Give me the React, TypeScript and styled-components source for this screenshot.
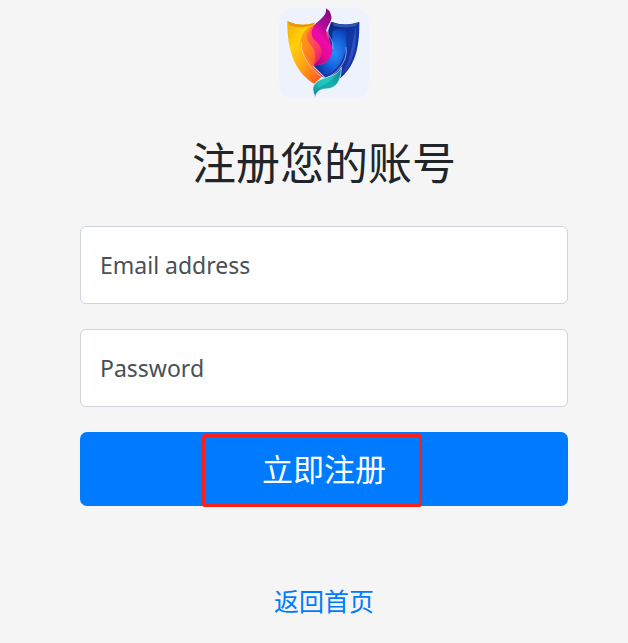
import React from "react";
import styled, { createGlobalStyle } from "styled-components";

const GlobalStyle = createGlobalStyle`
  *, *::before, *::after { box-sizing: border-box; }
  body {
    margin: 0;
    background: #f5f5f5;
    color: #212529;
    font-family: "Noto Sans", "Noto Sans CJK SC", sans-serif;
  }
`;

const Page = styled.main`
  display: flex;
  flex-direction: column;
  align-items: center;
  padding: 8px 60px 24px 80px;
`;

const Logo = styled.svg`
  width: 90px;
  height: 90px;
  border-radius: 13px;
  background: #edf2fc;
`;

const Title = styled.h1`
  margin: 38px 0 35px;
  font-size: 44px;
  line-height: 55px;
  font-weight: 400;
  text-align: center;
`;

const Form = styled.form`
  display: flex;
  flex-direction: column;
  gap: 25px;
  width: 100%;
`;

const Field = styled.div`
  display: grid;
  align-items: center;

  > * { grid-area: 1 / 1; }
`;

const Input = styled.input`
  width: 100%;
  height: 78px;
  padding: 0 19px;
  border: 1px solid #ced4da;
  border-radius: 6px;
  background: #fff;
  color: #212529;
  font: inherit;
  font-size: 23px;

  &:focus { outline: 2px solid #80bdff; }
`;

const Label = styled.label`
  padding: 0 20px;
  color: #495057;
  font-size: 23px;
  line-height: 36px;
  pointer-events: none;

  input:not(:placeholder-shown) + & { visibility: hidden; }
`;

const Submit = styled.button`
  display: flex;
  align-items: center;
  justify-content: center;
  position: relative;
  height: 74px;
  padding: 0;
  border: 0;
  border-radius: 7px;
  background: #007bff;
  color: #fff;
  font: inherit;
  font-size: 31px;
  line-height: 46px;
  cursor: pointer;
`;

const Marker = styled.span`
  position: absolute;
  inset: 2px 30% -1px 25%;
  border: 3px solid #fb2018;
  border-radius: 3px;
  pointer-events: none;
`;

const HomeLink = styled.a`
  margin-top: 76px;
  color: #007bff;
  font-size: 25px;
  line-height: 38px;
  text-decoration: none;
`;

function ShieldLogo() {
  return (
    <Logo viewBox="15 24 270 270" role="img" aria-label="Logo">
      <defs>
        <linearGradient id="gold" x1="0" y1="0" x2="0.9" y2="1">
          <stop offset="0" stopColor="#f5a900" />
          <stop offset="0.3" stopColor="#ffd00a" />
          <stop offset="0.6" stopColor="#ffa313" />
          <stop offset="1" stopColor="#ff4b25" />
        </linearGradient>
        <linearGradient id="orange" x1="0" y1="0" x2="0.7" y2="1">
          <stop offset="0" stopColor="#ffa412" />
          <stop offset="0.5" stopColor="#ff8a1c" />
          <stop offset="1" stopColor="#f94b42" />
        </linearGradient>
        <linearGradient id="flame" x1="0.7" y1="0" x2="0.3" y2="1">
          <stop offset="0" stopColor="#8c087f" />
          <stop offset="0.28" stopColor="#a60c98" />
          <stop offset="0.52" stopColor="#f00aa9" />
          <stop offset="0.75" stopColor="#e80899" />
          <stop offset="1" stopColor="#a70b82" />
        </linearGradient>
        <linearGradient id="coral" x1="0" y1="0" x2="0.7" y2="1">
          <stop offset="0" stopColor="#ff7b35" />
          <stop offset="0.5" stopColor="#ff4264" />
          <stop offset="1" stopColor="#e40b86" />
        </linearGradient>
        <linearGradient id="navy" x1="0.2" y1="0" x2="0.8" y2="1">
          <stop offset="0" stopColor="#071f78" />
          <stop offset="0.45" stopColor="#1238a5" />
          <stop offset="1" stopColor="#1830a5" />
        </linearGradient>
        <radialGradient id="azure" cx="0.6" cy="0.5" r="0.6">
          <stop offset="0" stopColor="#2b8cfa" />
          <stop offset="0.5" stopColor="#1664dc" />
          <stop offset="1" stopColor="#0932a3" />
        </radialGradient>
        <linearGradient id="teal" x1="1" y1="0" x2="0" y2="1">
          <stop offset="0" stopColor="#057d96" />
          <stop offset="0.45" stopColor="#22cbc0" />
          <stop offset="0.7" stopColor="#20bdb5" />
          <stop offset="1" stopColor="#08788b" />
        </linearGradient>
      </defs>
      <path d="M40 64Q79 82 122 68L153 220L121 252C65 218 39 156 40 64Z" fill="url(#gold)" />
      <path d="M40 64Q79 82 122 68L116 76Q78 88 48 76Z" fill="#e7960a" />
      <path d="M108 80C85 94 77 116 80 139C86 176 106 207 144 232L155 220L160 180L110 120Z" fill="url(#orange)" />
      <path d="M171 65Q215 81 256 66C257 149 241 201 195 238L150 234L119 197C160 191 180 167 160 98Z" fill="url(#navy)" />
      <path d="M176 68Q216 80 254 67L246 77Q215 87 179 78Z" fill="#3155ae" />
      <path d="M174 94Q198 81 224 90C206 108 224 127 215 151C205 188 184 218 153 230L119 197C156 194 181 165 174 94Z" fill="url(#azure)" />
      <path d="M246 77C249 143 236 193 200 225Q222 198 229 162Q237 121 246 77Z" fill="#2b50c2" />
      <path d="M108 80C85 95 79 116 85 137C91 163 111 183 119 195C133 197 150 193 157 184L145 95L122 74Z" fill="url(#orange)" />
      <path d="M120 74C94 95 93 115 108 132C126 151 128 173 119 195C150 196 169 177 174 153L161 95Z" fill="url(#coral)" />
      <path d="M156 25C160 50 133 60 122 75C107 96 111 111 128 125C151 145 147 174 119 195C151 197 173 177 175 151C176 129 161 119 157 101C152 78 181 64 170 42Q166 30 156 25Z" fill="url(#flame)" />
      <path d="M171 66C164 82 159 92 165 107C174 120 178 132 177 147" fill="none" stroke="#bdcfff" strokeWidth="2" opacity="0.8" />
      <path d="M83 128Q79 146 90 168Q107 205 145 233" fill="none" stroke="#fff4df" strokeWidth="2" strokeLinecap="round" opacity="0.85" />
      <path d="M216 143C222 182 192 220 154 235" fill="none" stroke="#e5f2ff" strokeWidth="2" strokeLinecap="round" opacity="0.85" />
      <path d="M117 198L153 233" stroke="#e9f1ff" strokeWidth="3" />
      <path d="M202 202C193 221 175 228 155 233C129 240 110 254 119 279L124 293C126 273 139 266 160 266C184 265 201 248 202 202Z" fill="url(#teal)" stroke="#edf6fb" strokeWidth="2" />
      <path d="M199 209C190 237 157 246 132 266Q120 275 124 290C127 270 144 268 160 265C184 262 199 245 199 209Z" fill="#087f94" opacity="0.35" />
    </Logo>
  );
}

export default function App() {
  return (
    <>
      <GlobalStyle />
      <Page>
        <ShieldLogo />
        <Title>注册您的账号</Title>
        <Form onSubmit={(event: React.FormEvent) => event.preventDefault()}>
          <Field>
            <Input id="email" type="email" placeholder=" " autoComplete="email" />
            <Label htmlFor="email">Email address</Label>
          </Field>
          <Field>
            <Input id="password" type="password" placeholder=" " autoComplete="new-password" />
            <Label htmlFor="password">Password</Label>
          </Field>
          <Submit type="submit">
            立即注册
            <Marker />
          </Submit>
        </Form>
        <HomeLink href="#">返回首页</HomeLink>
      </Page>
    </>
  );
}
